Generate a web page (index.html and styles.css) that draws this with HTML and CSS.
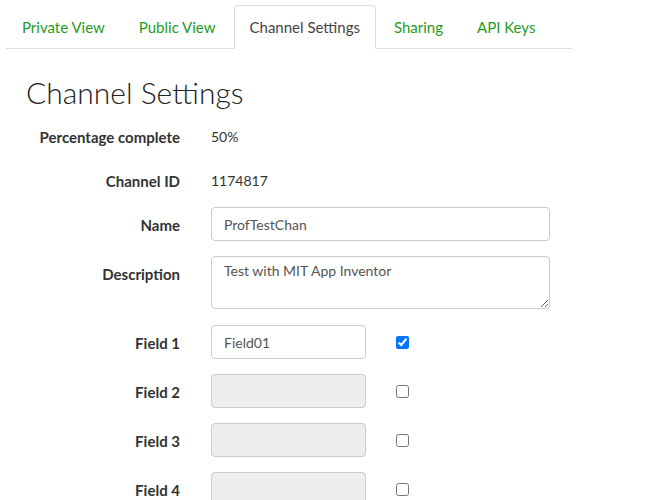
FILE: index.html
```html
<!DOCTYPE html>
<html>
<head>
<meta charset="utf-8">
<link rel="stylesheet" href="styles.css">
</head>
<body>
<ul class="tabs">
  <li class="tab"><a>Private View</a></li>
  <li class="tab"><a>Public View</a></li>
  <li class="tab active"><a>Channel Settings</a></li>
  <li class="tab"><a>Sharing</a></li>
  <li class="tab"><a>API Keys</a></li>
</ul>
<div class="content">
  <h2 class="title">Channel Settings</h2>
  <div class="form">
    <div class="row static">
      <label class="label">Percentage complete</label>
      <span class="value">50%</span>
    </div>
    <div class="row static">
      <label class="label">Channel ID</label>
      <span class="value">1174817</span>
    </div>
    <div class="row">
      <label class="label">Name</label>
      <input class="input wide" type="text" value="ProfTestChan">
    </div>
    <div class="row">
      <label class="label">Description</label>
      <textarea class="input wide area">Test with MIT App Inventor</textarea>
    </div>
    <div class="row">
      <label class="label">Field 1</label>
      <input class="input short" type="text" value="Field01">
      <input class="check" type="checkbox" checked>
    </div>
    <div class="row">
      <label class="label">Field 2</label>
      <input class="input short" type="text" disabled>
      <input class="check" type="checkbox">
    </div>
    <div class="row">
      <label class="label">Field 3</label>
      <input class="input short" type="text" disabled>
      <input class="check" type="checkbox">
    </div>
    <div class="row">
      <label class="label">Field 4</label>
      <input class="input short" type="text" disabled>
      <input class="check" type="checkbox">
    </div>
  </div>
</div>
</body>
</html>
```
FILE: styles.css
```css
html, body {
  margin: 0;
  padding: 0;
  background: #fff;
  font-family: Lato, "Open Sans", sans-serif;
  color: #333;
  overflow: hidden;
}

.tabs {
  list-style: none;
  margin: 5px 0 0 6px;
  padding: 0;
  width: 566px;
  display: flex;
  border-bottom: 1px solid #ddd;
}

.tab {
  flex: none;
  margin-right: 2px;
  margin-bottom: -1px;
  white-space: nowrap;
}

.tab a {
  display: block;
  padding: 11px 15px 11px;
  line-height: 20px;
  font-size: 15px;
  color: #1f9b1f;
  border: 1px solid transparent;
  border-radius: 4px 4px 0 0;
}

.tab.active a {
  color: #444;
  background: #fff;
  border-color: #ddd;
  border-bottom-color: #fff;
}

.content {
  padding-left: 26px;
}

.title {
  margin: 27px 0 10px;
  font-size: 30px;
  line-height: 33px;
  font-weight: 300;
  color: #222;
}

.form {
  margin-left: -26px;
  display: flex;
  flex-direction: column;
  gap: 15px;
}

.row {
  display: flex;
  align-items: flex-start;
}

.row.static {
  height: 29px;
}

.label {
  width: 180px;
  margin-right: 31px;
  text-align: right;
  font-weight: 700;
  font-size: 15px;
  line-height: 20px;
  padding-top: 8px;
  color: #333;
}

.value {
  font-size: 14px;
  line-height: 20px;
  padding-top: 8px;
  color: #333;
}

.input {
  box-sizing: border-box;
  height: 34px;
  border: 1px solid #ccc;
  border-radius: 4px;
  padding: 6px 12px;
  font-family: Lato, "Open Sans", sans-serif;
  font-size: 14px;
  color: #555;
  background: #fff;
  margin: 0;
}

.input:disabled {
  background: #eee;
}

.wide {
  width: 339px;
}

.area {
  height: 53px;
  margin-bottom: 1px;
  resize: vertical;
  line-height: 20px;
  padding-top: 4px;
}

.short {
  width: 155px;
}

.check {
  margin: 0 0 0 30px;
  width: 13px;
  height: 13px;
  align-self: center;
}
```
